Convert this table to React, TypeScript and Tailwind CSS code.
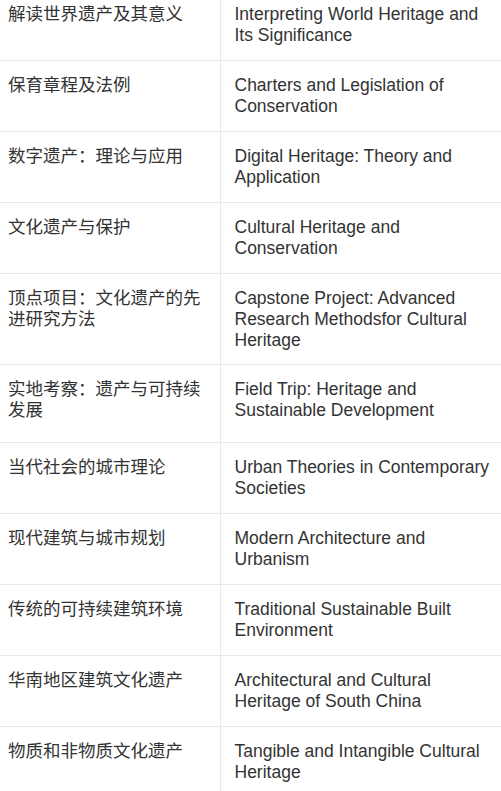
const courses = [
  { zh: "解读世界遗产及其意义", en: "Interpreting World Heritage and Its Significance" },
  { zh: "保育章程及法例", en: "Charters and Legislation of Conservation" },
  { zh: "数字遗产：理论与应用", en: "Digital Heritage: Theory and Application" },
  { zh: "文化遗产与保护", en: "Cultural Heritage and Conservation" },
  { zh: "顶点项目：文化遗产的先进研究方法", en: "Capstone Project: Advanced Research Methodsfor Cultural Heritage" },
  { zh: "实地考察：遗产与可持续发展", en: "Field Trip: Heritage and Sustainable Development", tall: true },
  { zh: "当代社会的城市理论", en: "Urban Theories in Contemporary Societies" },
  { zh: "现代建筑与城市规划", en: "Modern Architecture and Urbanism" },
  { zh: "传统的可持续建筑环境", en: "Traditional Sustainable Built Environment" },
  { zh: "华南地区建筑文化遗产", en: "Architectural and Cultural Heritage of South China" },
  { zh: "物质和非物质文化遗产", en: "Tangible and Intangible Cultural Heritage" },
];

export default function App() {
  return (
    <div className="h-[791px] w-[501px] overflow-hidden bg-white font-['Liberation_Sans','Noto_Sans_CJK_SC',sans-serif] text-[17.5px] leading-[21px] text-[#333]">
      <table className="-mt-[10px] w-full table-fixed border-collapse">
        <colgroup>
          <col className="w-[220px]" />
          <col />
        </colgroup>
        <tbody>
          {courses.map((c) => (
            <tr key={c.zh} className="border-b border-[#e8e8ee]">
              <td
                className={
                  "border-r border-[#e8e8ee] pl-2 pr-[14px] pt-[14px] align-top " +
                  (c.tall ? "pb-[21px]" : "pb-[13.9px]")
                }
              >
                {c.zh}
              </td>
              <td
                className={
                  "pl-[14px] pr-2 pt-[14px] align-top " +
                  (c.tall ? "pb-[21px]" : "pb-[13.9px]")
                }
              >
                {c.en}
              </td>
            </tr>
          ))}
        </tbody>
      </table>
    </div>
  );
}
